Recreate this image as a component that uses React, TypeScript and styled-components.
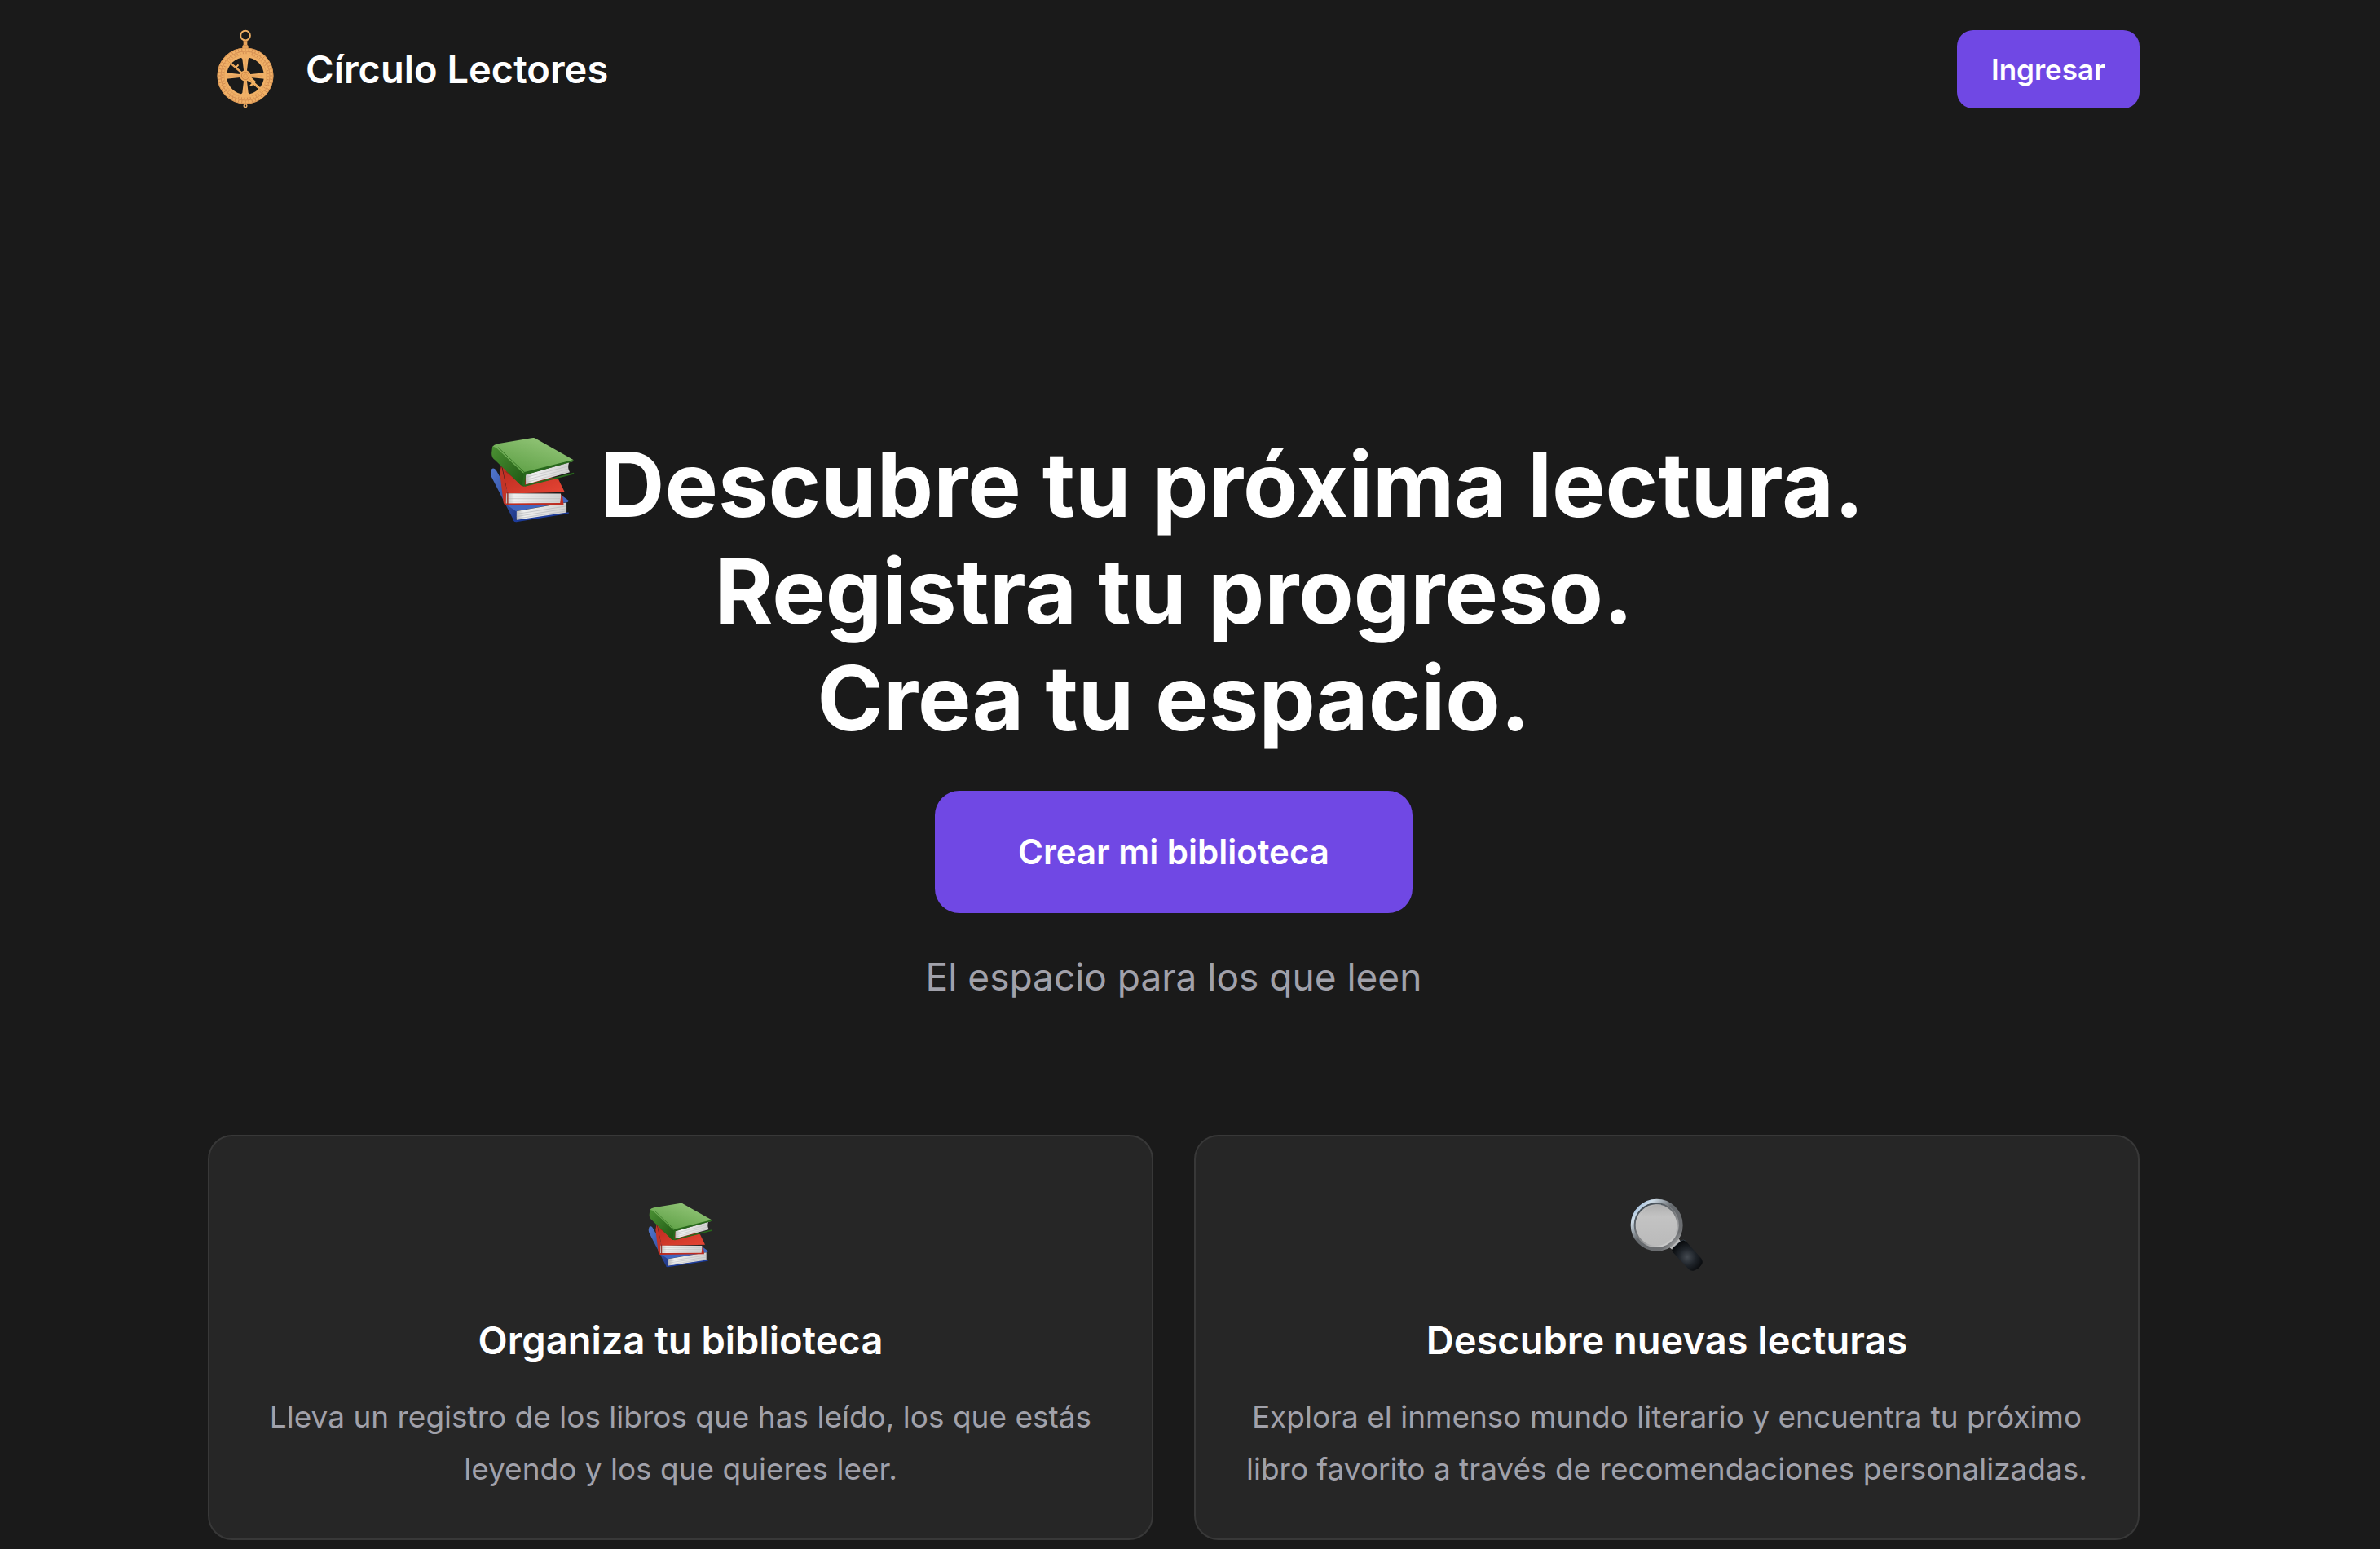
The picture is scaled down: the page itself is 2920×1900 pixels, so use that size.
import React from 'react';
import styled, { createGlobalStyle } from 'styled-components';

const GlobalStyle = createGlobalStyle`
  *, *::before, *::after { box-sizing: border-box; }
  html { background: #1a1a1a; }
  body {
    margin: 0;
    background: #1a1a1a;
    color: #ffffff;
    font-family: Inter, "Liberation Sans", sans-serif;
  }
  h1, h2, p { margin: 0; }
`;

const Page = styled.div`
  padding-right: 40px;
`;

const Container = styled.div`
  width: 100%;
  max-width: 2370px;
  margin: 0 auto;
`;

const Header = styled.header`
  display: flex;
  align-items: center;
  justify-content: space-between;
  padding: 36px 0;
`;

const Brand = styled.a`
  display: flex;
  align-items: center;
  gap: 36px;
  padding-left: 8px;
  color: inherit;
  font-size: 47px;
  font-weight: 600;
  line-height: 64px;
  text-decoration: none;
`;

const Button = styled.button<{ $large?: boolean }>`
  border: 0;
  cursor: pointer;
  background: #7048e4;
  color: #ffffff;
  font-family: inherit;
  font-weight: 600;
  font-size: ${(p) => (p.$large ? 42 : 35)}px;
  line-height: ${(p) => (p.$large ? 64 : 48)}px;
  padding: ${(p) => (p.$large ? '43px 102px' : '24px 42px')};
  border-radius: ${(p) => (p.$large ? 30 : 20)}px;
`;

const Hero = styled.section`
  display: flex;
  flex-direction: column;
  align-items: center;
  padding: 360px 0 162px;
  text-align: center;
`;

const Title = styled.h1`
  margin-bottom: 48px;
  font-size: 110px;
  font-weight: 700;
  line-height: 131px;
`;

const TitleLine = styled.span`
  display: flex;
  align-items: center;
  justify-content: center;
`;

const TitleIcon = styled.span`
  display: flex;
  padding: 0 30px 12px 8px;
`;

const Tagline = styled.p`
  margin-top: 46px;
  color: #a1a1aa;
  font-size: 46px;
  line-height: 64px;
`;

const Cards = styled.section`
  display: grid;
  grid-template-columns: repeat(2, 1fr);
  gap: 50px;
`;

const Card = styled.article`
  display: flex;
  flex-direction: column;
  align-items: center;
  padding: 76px 56px 53px;
  border: 2px solid #383838;
  border-radius: 30px;
  background: #262626;
  text-align: center;
`;

const CardIcon = styled.div`
  display: flex;
  align-items: center;
  height: 90px;
  margin-bottom: 52px;
`;

const CardTitle = styled.h2`
  margin-bottom: 30px;
  font-size: 47px;
  font-weight: 600;
  line-height: 64px;
`;

const CardText = styled.p`
  color: #a1a1aa;
  font-size: 37px;
  line-height: 64px;
`;

function Astrolabe() {
  const ticks = Array.from({ length: 48 }, (_, i) => i * 7.5);
  return (
    <svg width="76" height="97" viewBox="72 53 228 291" fill="none" aria-hidden="true">
      <circle cx="186" cy="76" r="17.5" stroke="#f0b064" strokeWidth="6" />
      <path d="M179 93h14v16l4 5v10h-22v-10l4-5z" fill="#e9a55c" />
      <path d="M179 97h14M177 112h18" stroke="#b87440" strokeWidth="1.5" />
      <circle cx="186" cy="224" r="86" stroke="#f0b067" strokeWidth="35" />
      <circle cx="186" cy="224" r="102" stroke="#d18b4c" strokeWidth="2" />
      <circle cx="186" cy="224" r="90" stroke="#c98148" strokeWidth="2" />
      <circle cx="186" cy="224" r="78" stroke="#dc9855" strokeWidth="2" />
      {ticks.map((a) => (
        <path key={a} d="M186 124v9M189 137v7" stroke="#bb7441" strokeWidth="1.8" transform={`rotate(${a} 186 224)`} />
      ))}
      {[0, 90, 180, 270].map((a) => (
        <g key={a} transform={`rotate(${a} 186 224)`}>
          <path
            d={a % 180 === 0
              ? 'M160 148q26-8 52 0q-13 10-15 14l-6 50h-10l-6-50q-2-4-15-14z'
              : 'M175 154h22l-6 58h-10z'}
            fill="#f0b067"
          />
          <path d="M186 160v48" stroke="#d8924f" strokeWidth="2" />
        </g>
      ))}
      <g transform="rotate(41 186 224)">
        <path d="M91 221h46v-11h6v11h27v-4h32l4-3 24 1v5h19l33 3 2 2-2 4h-52l-4 11h-5v-11l-15 3-4-1h-32v-3H91l-4-4z" fill="#f3b264" />
        <path d="M95 225h70M235 226h40M206 224h22" stroke="#d58d49" strokeWidth="2" />
      </g>
      <circle cx="186" cy="224" r="20" fill="#f0ad61" />
      <circle cx="186" cy="224" r="14" stroke="#bd743c" strokeWidth="2" />
      <circle cx="186" cy="224" r="7" stroke="#d58d49" strokeWidth="2" />
      <circle cx="186" cy="334" r="5.5" stroke="#e7aa66" strokeWidth="4" />
    </svg>
  );
}

function Books({ size, id }: { size: number; id: string }) {
  return (
    <svg width={size} height={size} viewBox="75 70 240 240" aria-hidden="true">
      <defs>
        <linearGradient id={`${id}-green`} x1="0" y1="1" x2="0.7" y2="0">
          <stop offset="0" stopColor="#559a3d" />
          <stop offset="1" stopColor="#93c578" />
        </linearGradient>
        <linearGradient id={`${id}-spine`} x1="0" y1="0" x2="1" y2="1">
          <stop offset="0" stopColor="#4b9133" />
          <stop offset="1" stopColor="#1d5612" />
        </linearGradient>
        <linearGradient id={`${id}-red`} x1="0" y1="0" x2="1" y2="1">
          <stop offset="0" stopColor="#b92a1f" />
          <stop offset="1" stopColor="#e64534" />
        </linearGradient>
        <linearGradient id={`${id}-blue`} x1="0" y1="0" x2="1" y2="1">
          <stop offset="0" stopColor="#5278ce" />
          <stop offset="1" stopColor="#1d3586" />
        </linearGradient>
        <linearGradient id={`${id}-page`} x1="0" y1="0" x2="1" y2="0">
          <stop offset="0" stopColor="#bdbdbd" />
          <stop offset="0.15" stopColor="#efefef" />
          <stop offset="1" stopColor="#d0d0d0" />
        </linearGradient>
      </defs>
      <path d="M80 160q5-5 12 2l60 108-3 38q-7 0-9-8L79 181q-4-11 1-21z" fill={`url(#${id}-blue)`} />
      <path d="M125 262l146-32 26 19-4 4-145 25z" fill="#4166c0" />
      <path d="M150 278l140-24v30l-140 20z" fill={`url(#${id}-page)`} />
      <path d="M150 286l139-22M150 293l139-22M150 299l139-21" stroke="#b4b6ba" strokeWidth="1.5" />
      <path d="M147 303l149-22v4l-147 23q-6 0-8-5z" fill="#1d3c9a" />
      <path d="M107 148l17 76-2 37q-8-1-9-8l-10-82z" fill="#c23428" />
      <path d="M109 150l158 38 18 37-160 4z" fill={`url(#${id}-red)`} />
      <path d="M121 228l153 1v27l-154 2z" fill={`url(#${id}-page)`} />
      <path d="M123 236h149M123 243h149M123 250h149" stroke="#bbb" strokeWidth="1.5" />
      <path d="M119 256l153-1 3-24 3 1 4 28-160 2q-5 0-6-4z" fill="#bd2d22" />
      <path d="M125 225v33" stroke="#8f2018" strokeWidth="3" />
      <path d="M118 167l54 41 100-25-90-20z" fill="#5b160e" opacity=".4" />
      <path d="M82 97q6-5 14 2l79 73-4 36q-5 1-10-3L90 135q-11-7-10-20z" fill={`url(#${id}-spine)`} />
      <path d="M83 96q3-4 14-7l95-16q8-2 13 2l104 59-2 5-131 34q-5 1-9-3l-74-70z" fill={`url(#${id}-green)`} />
      <path d="M175 175l122-33q-5 14 2 27l-123 34z" fill={`url(#${id}-page)`} />
      <path d="M177 183l117-31M177 190l117-30M177 197l118-30" stroke="#bfbfbf" strokeWidth="1.5" />
      <path d="M309 134v4l-133 38-3 28 137-34 2 4-138 35q-5 0-8-4l4-36z" fill="#28681c" />
      <path d="M98 99l76 72" stroke="#30721f" strokeWidth="2" />
    </svg>
  );
}

function Magnifier() {
  return (
    <svg width="90" height="90" viewBox="90 62 270 270" aria-hidden="true">
      <defs>
        <linearGradient id="rim" x1="0" y1="0" x2="1" y2="1">
          <stop offset="0" stopColor="#77a4d6" />
          <stop offset="0.2" stopColor="#cfdde8" />
          <stop offset="0.45" stopColor="#65696d" />
          <stop offset="0.8" stopColor="#6c6e71" />
          <stop offset="1" stopColor="#d8d8d8" />
        </linearGradient>
        <linearGradient id="rim-inner" x1="0" y1="0" x2="0.6" y2="1">
          <stop offset="0" stopColor="#35424d" />
          <stop offset="0.6" stopColor="#77797c" />
          <stop offset="1" stopColor="#c8c8c8" />
        </linearGradient>
        <linearGradient id="lens" x1="0" y1="0" x2="0" y2="1">
          <stop offset="0" stopColor="#adadad" />
          <stop offset="0.3" stopColor="#c3c3c3" />
          <stop offset="1" stopColor="#bababa" />
        </linearGradient>
        <radialGradient id="handle" cx="0.5" cy="0.55" r="0.55">
          <stop offset="0" stopColor="#454b52" />
          <stop offset="0.5" stopColor="#1f242a" />
          <stop offset="1" stopColor="#07090b" />
        </radialGradient>
      </defs>
      <path d="M232 240l34-34 10 14-30 32z" fill="#b9b9b9" />
      <circle cx="188" cy="160" r="89" fill="#8d8f91" stroke="url(#rim)" strokeWidth="14" />
      <circle cx="186" cy="160" r="79" fill="url(#lens)" stroke="url(#rim-inner)" strokeWidth="6" />
      <path d="M124 128q26-47 80-44" fill="none" stroke="#d0d0d0" strokeWidth="2" opacity=".6" />
      <path d="M247 244l30-26q9-6 18 1l56 63q10 12 2 24-11 17-30 22-10 2-17-5l-58-62q-8-9-1-17z" fill="url(#handle)" />
      <path d="M247 244l30-26q9-6 18 1" fill="none" stroke="#5e7287" strokeWidth="2" opacity=".6" />
    </svg>
  );
}

export default function App() {
  return (
    <>
      <GlobalStyle />
      <Page>
        <Container>
          <Header>
            <Brand href="#">
              <Astrolabe />
              Círculo Lectores
            </Brand>
            <Button type="button">Ingresar</Button>
          </Header>
          <main>
            <Hero>
              <Title>
                <TitleLine>
                  <TitleIcon><Books size={105} id="hero" /></TitleIcon>
                  Descubre tu próxima lectura.
                </TitleLine>
                <TitleLine>Registra tu progreso.</TitleLine>
                <TitleLine>Crea tu espacio.</TitleLine>
              </Title>
              <Button type="button" $large>Crear mi biblioteca</Button>
              <Tagline>El espacio para los que leen</Tagline>
            </Hero>
            <Cards>
              <Card>
                <CardIcon><Books size={80} id="card" /></CardIcon>
                <CardTitle>Organiza tu biblioteca</CardTitle>
                <CardText>Lleva un registro de los libros que has leído, los que estás leyendo y los que quieres leer.</CardText>
              </Card>
              <Card>
                <CardIcon><Magnifier /></CardIcon>
                <CardTitle>Descubre nuevas lecturas</CardTitle>
                <CardText>Explora el inmenso mundo literario y encuentra tu próximo libro favorito a través de recomendaciones personalizadas.</CardText>
              </Card>
            </Cards>
          </main>
        </Container>
      </Page>
    </>
  );
}
